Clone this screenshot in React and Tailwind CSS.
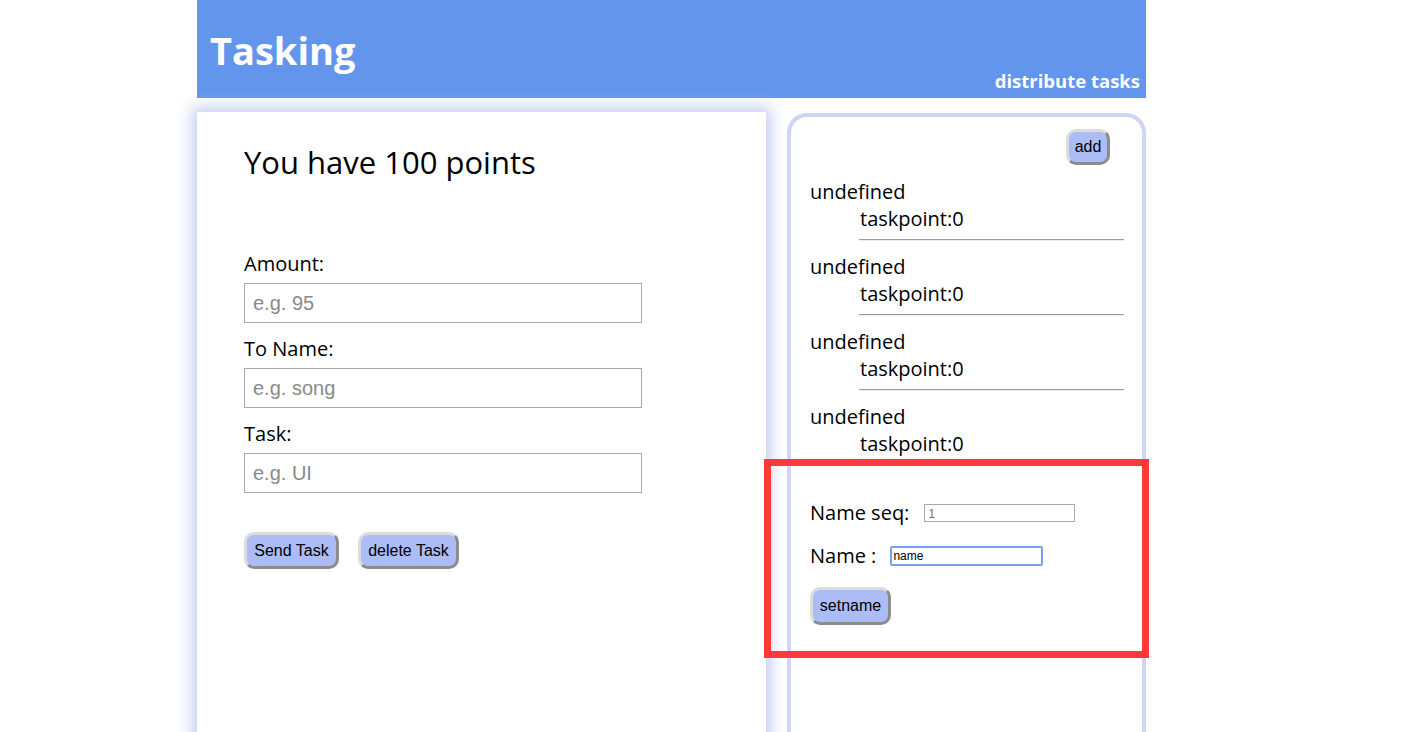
import React from "react";

const segoe = { fontFamily: '"Open Sans", "Noto Sans", sans-serif' };

function Btn({ children, className = "" }) {
  return (
    <button
      className={
        "box-border rounded-[10px] border-[3px] border-t-[#dcdcdc] border-l-[#dcdcdc] border-r-[#8c8c8c] border-b-[#8c8c8c] bg-[#abbcf6] text-[16px] leading-none text-black font-['Liberation_Sans',Arial,sans-serif] " +
        className
      }
    >
      {children}
    </button>
  );
}

function Field({ label, placeholder, first }) {
  return (
    <div className={first ? "" : "mt-[12px]"}>
      <div className="h-[28px] text-[20px] leading-[28px] text-black">{label}</div>
      <input
        placeholder={placeholder}
        className="mt-[5px] box-border block h-[40px] w-[398px] border border-[#a9a9a9] px-[8px] text-[20px] font-['Liberation_Sans',Arial,sans-serif] text-black outline-none placeholder:text-[#8a8a8a]"
      />
    </div>
  );
}

function Item() {
  return (
    <div className="text-[20px] leading-[27px] text-black">
      <div>undefined</div>
      <div className="ml-[50px]">taskpoint:0</div>
      <div className="ml-[49px] mr-[18px] mt-[7px] mb-[12px] h-0 border-t border-t-[#9c9c9c] border-b border-b-[#ededed]" />
    </div>
  );
}

export default function App() {
  return (
    <div className="relative min-h-[732px] w-[1411px] overflow-hidden bg-white" style={segoe}>
      <div className="ml-[197px] w-[949px]">
        <header className="flex h-[98px] items-stretch justify-between bg-[#6495ed] text-white">
          <div className="pl-[13px] pt-[22px] text-[38px] font-bold leading-[56px]">Tasking</div>
          <div className="self-end pb-[4px] pr-[6px] text-[18.5px] font-bold leading-[26px]">distribute tasks</div>
        </header>

        <div className="mt-[14px] flex items-start">
          <section className="relative h-[640px] w-[569px] bg-white pl-[47px] pt-[138px] shadow-[0_0_14px_5px_rgba(196,202,240,0.95)]">
            <div className="absolute left-[47px] top-[30px] text-[31px] leading-[40px] text-black">You have 100 points</div>
            <Field first label="Amount:" placeholder="e.g. 95" />
            <Field label="To Name:" placeholder="e.g. song" />
            <Field label="Task:" placeholder="e.g. UI" />
            <div className="mt-[39px] flex gap-[19px]">
              <Btn className="h-[37px] w-[95px]">Send Task</Btn>
              <Btn className="h-[37px] w-[101px]">delete Task</Btn>
            </div>
          </section>

          <section className="ml-[21px] mt-[1px] box-border h-[640px] w-[359px] rounded-[20px] border-[4px] border-[#d0d5f3] bg-white pl-[19px]">
            <div className="mr-[32px] mt-[12px] flex justify-end">
              <Btn className="h-[36px] w-[44px]">add</Btn>
            </div>
            <div className="mt-[13px]">
              <Item />
              <Item />
              <Item />
              <Item />
            </div>
            <div className="mt-[33px] flex items-center text-[20px] leading-[28px] text-black">
              <span>Name seq:</span>
              <input
                defaultValue="1"
                className="ml-[15px] box-border h-[18px] w-[151px] border border-[#a9a9a9] px-[3px] pt-[2px] text-[12px] leading-none text-[#9a6a00] font-['Liberation_Sans',Arial,sans-serif] outline-none"
              />
            </div>
            <div className="mt-[15px] flex items-center text-[20px] leading-[28px] text-black">
              <span>Name :</span>
              <input
                defaultValue="name"
                className="ml-[14px] box-border h-[20px] w-[153px] rounded-[2px] border-2 border-[#79a0ee] px-[1px] text-[12px] leading-none text-black font-['Liberation_Sans',Arial,sans-serif] outline-none"
              />
            </div>
            <div className="mt-[17px]">
              <Btn className="h-[38px] w-[81px]">setname</Btn>
            </div>
          </section>
        </div>
      </div>

      <div className="pointer-events-none absolute left-[764px] top-[459px] h-[199px] w-[385px] border-[7px] border-[#fd3a3a]" />
    </div>
  );
}
